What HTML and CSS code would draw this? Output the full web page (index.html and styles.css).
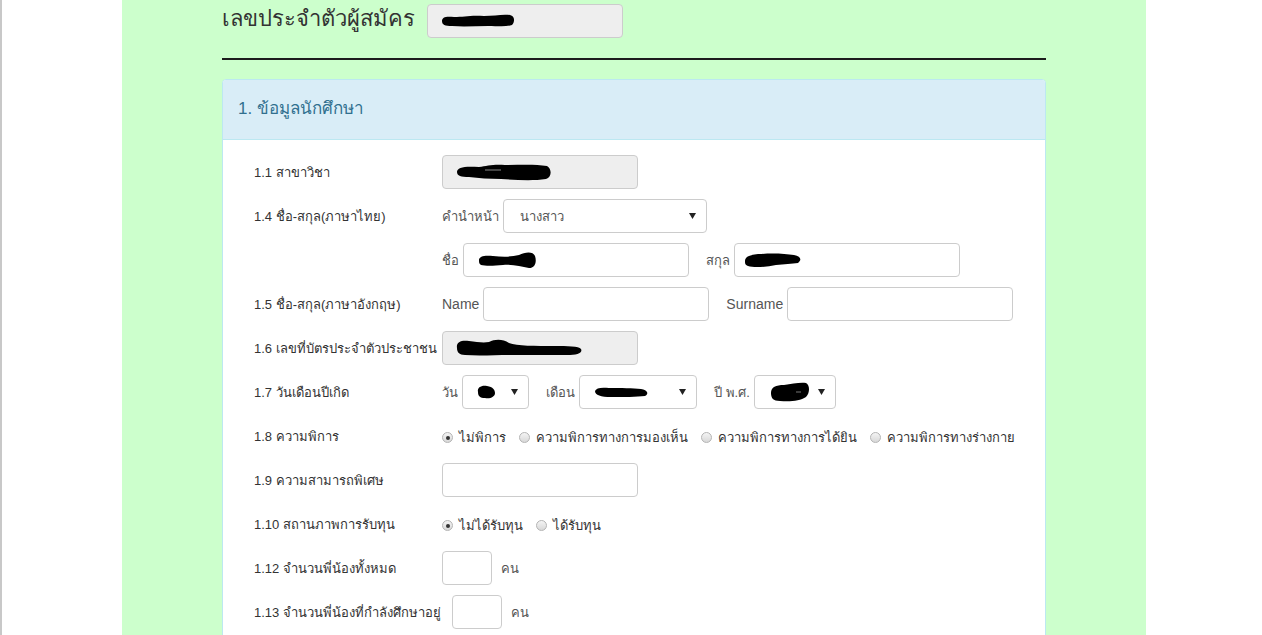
FILE: index.html
```html
<!DOCTYPE html>
<html lang="th">
<head>
<meta charset="utf-8">
<title>ข้อมูลนักศึกษา</title>
<link rel="stylesheet" href="styles.css">
</head>
<body>
<div class="page">
  <div class="sheet">
    <div class="head">
      <h2 class="head-title">เลขประจำตัวผู้สมัคร</h2>
      <div class="field ro w196 head-field">
        <svg class="blob" width="76" height="16" viewBox="0 0 76 16"><path d="M2 8 C2 4 6 3 14 4 C24 4 30 2 44 3 C54 3 62 1 70 2 C75 3 75 9 72 12 C66 14 58 13 48 13 C36 13 24 14 12 13 C5 13 2 12 2 8Z"/></svg>
      </div>
    </div>
    <hr class="rule">
    <div class="panel">
      <div class="panel-heading">1. ข้อมูลนักศึกษา</div>
      <div class="panel-body">
        <div class="row">
          <div class="lbl">1.1 สาขาวิชา</div>
          <div class="field ro w196">
            <svg class="blob" width="98" height="20" viewBox="0 0 98 20"><path d="M2 10 C2 5 10 4 24 5 C32 4 38 2 50 3 C64 3 80 2 92 4 C97 7 97 15 91 17 C78 19 62 18 46 17 C34 17 24 16 14 15 C6 15 2 14 2 10Z"/><path d="M30 8 L46 8" stroke="#888" stroke-width="1"/></svg>
          </div>
        </div>
        <div class="row">
          <div class="lbl">1.4 ชื่อ-สกุล(ภาษาไทย)</div>
          <div class="ctl">
            <span class="pre">คำนำหน้า</span>
            <div class="field sel w204"><span class="sel-text">นางสาว</span><svg class="arrow" width="7" height="6" viewBox="0 0 7 6"><path d="M0 0 L7 0 L3.5 6Z"/></svg></div>
          </div>
        </div>
        <div class="row">
          <div class="lbl"></div>
          <div class="ctl">
            <span class="pre">ชื่อ</span>
            <div class="field w226 tight">
              <svg class="blob" width="60" height="20" viewBox="0 0 60 20"><path d="M2 10 C2 6 8 5 16 6 C26 7 34 7 42 5 C48 2 56 1 58 6 C60 12 58 18 52 18 C44 17 36 14 26 15 C16 16 8 16 4 15 C2 14 2 12 2 10Z"/></svg>
            </div>
          </div>
          <div class="ctl">
            <span class="pre">สกุล</span>
            <div class="field w226 tighter">
              <svg class="blob" width="58" height="17" viewBox="0 0 58 17"><path d="M1 9 C1 4 8 2 18 2 C30 1 42 2 50 3 C57 4 58 8 54 11 C48 12 40 12 32 13 C22 15 10 16 4 14 C1 13 1 11 1 9Z"/></svg>
            </div>
          </div>
        </div>
        <div class="row">
          <div class="lbl">1.5 ชื่อ-สกุล(ภาษาอังกฤษ)</div>
          <div class="ctl">
            <span class="pre en">Name</span>
            <div class="field w226"></div>
          </div>
          <div class="ctl">
            <span class="pre en">Surname</span>
            <div class="field w226"></div>
          </div>
        </div>
        <div class="row">
          <div class="lbl">1.6 เลขที่บัตรประจำตัวประชาชน</div>
          <div class="field ro w196">
            <svg class="blob" width="128" height="20" viewBox="0 0 128 20"><path d="M2 10 C1 4 6 2 14 3 C22 4 28 5 34 4 C40 1 48 1 54 5 C62 8 80 8 100 8 C112 8 124 8 126 11 C128 15 122 17 112 17 C96 17 76 17 56 17 C40 17 24 18 10 17 C4 17 2 14 2 10Z"/></svg>
          </div>
        </div>
        <div class="row">
          <div class="lbl">1.7 วันเดือนปีเกิด</div>
          <div class="ctl">
            <span class="pre">วัน</span>
            <div class="field sel w67 sel-blob">
              <svg class="blob" width="20" height="16" viewBox="0 0 20 16"><path d="M2 8 C1 3 6 1 11 2 C17 3 19 6 19 9 C19 13 14 15 9 14 C4 14 2 12 2 8Z"/></svg>
              <svg class="arrow" width="7" height="6" viewBox="0 0 7 6"><path d="M0 0 L7 0 L3.5 6Z"/></svg>
            </div>
          </div>
          <div class="ctl">
            <span class="pre">เดือน</span>
            <div class="field sel w118 sel-blob">
              <svg class="blob" width="56" height="12" viewBox="0 0 56 12"><path d="M2 5 C3 2 8 1 16 2 C28 2 40 2 48 3 C55 4 56 8 52 10 C44 11 30 11 18 11 C8 11 2 9 2 5Z"/></svg>
              <svg class="arrow" width="7" height="6" viewBox="0 0 7 6"><path d="M0 0 L7 0 L3.5 6Z"/></svg>
            </div>
          </div>
          <div class="ctl">
            <span class="pre">ปี พ.ศ.</span>
            <div class="field sel w82 sel-blob">
              <svg class="blob" width="42" height="22" viewBox="0 0 42 22"><path d="M3 12 C3 6 8 4 16 4 C24 3 32 1 38 2 C42 4 42 12 38 16 C32 20 22 21 12 20 C5 20 3 17 3 12Z"/><path d="M28 11 L33 11" stroke="#777" stroke-width="1"/></svg>
              <svg class="arrow" width="7" height="6" viewBox="0 0 7 6"><path d="M0 0 L7 0 L3.5 6Z"/></svg>
            </div>
          </div>
        </div>
        <div class="row">
          <div class="lbl">1.8 ความพิการ</div>
          <div class="radios">
            <span class="radio on"><span class="dot"></span>ไม่พิการ</span>
            <span class="radio"><span class="dot"></span>ความพิการทางการมองเห็น</span>
            <span class="radio"><span class="dot"></span>ความพิการทางการได้ยิน</span>
            <span class="radio"><span class="dot"></span>ความพิการทางร่างกาย</span>
          </div>
        </div>
        <div class="row">
          <div class="lbl">1.9 ความสามารถพิเศษ</div>
          <div class="field w196"></div>
        </div>
        <div class="row">
          <div class="lbl">1.10 สถานภาพการรับทุน</div>
          <div class="radios">
            <span class="radio on"><span class="dot"></span>ไม่ได้รับทุน</span>
            <span class="radio"><span class="dot"></span>ได้รับทุน</span>
          </div>
        </div>
        <div class="row">
          <div class="lbl">1.12 จำนวนพี่น้องทั้งหมด</div>
          <div class="field w50"></div>
          <span class="unit">คน</span>
        </div>
        <div class="row">
          <div class="lbl lbl-wide">1.13 จำนวนพี่น้องที่กำลังศึกษาอยู่</div>
          <div class="field w50"></div>
          <span class="unit">คน</span>
        </div>
      </div>
    </div>
  </div>
</div>
</body>
</html>
```

FILE: styles.css
```css
html, body {
  margin: 0;
  padding: 0;
  background: #fff;
  overflow: hidden;
}

body {
  font-family: "Liberation Sans", Arial, "Noto Sans", sans-serif;
  color: #333;
}

.page {
  border-left: 2px solid #c8c8c8;
  height: 635px;
}

.sheet {
  width: 1024px;
  margin-left: 120px;
  height: 635px;
  background: #ccffcc;
  padding: 4px 100px 0;
  box-sizing: border-box;
}

.head {
  display: flex;
  align-items: center;
  gap: 12px;
  height: 34px;
}

.head-title {
  margin: 0;
  font-size: 22px;
  font-weight: normal;
  color: #333;
  line-height: 34px;
  padding-bottom: 4px;
}

.head-field {
  padding-left: 4px;
}

.rule {
  margin: 20px 0 19px;
  border: 0;
  border-top: 2px solid #1c1c1c;
  height: 0;
}

.panel {
  border: 1px solid #bce8f1;
  border-radius: 4px;
  background: #fff;
  height: 600px;
}

.panel-heading {
  height: 60px;
  display: flex;
  align-items: center;
  padding: 0 15px 4px;
  box-sizing: border-box;
  background: #d9edf7;
  border-bottom: 1px solid #bce8f1;
  color: #31708f;
  font-size: 17px;
  border-radius: 3px 3px 0 0;
}

.panel-body {
  padding: 15px 15px 0 31px;
}

.row {
  display: flex;
  align-items: center;
  height: 34px;
  margin-bottom: 10px;
}

.lbl {
  min-width: 188px;
  box-sizing: border-box;
  font-size: 13px;
  color: #333;
  white-space: nowrap;
  flex-shrink: 0;
}

.lbl-wide {
  min-width: 198px;
}

.ctl {
  display: flex;
  align-items: center;
  margin-right: 17px;
}

.pre {
  font-size: 13px;
  color: #555;
  margin-right: 4px;
  white-space: nowrap;
}

.pre.en {
  font-size: 14px;
}

.field {
  height: 34px;
  box-sizing: border-box;
  border: 1px solid #ccc;
  border-radius: 4px;
  background: #fff;
  display: flex;
  align-items: center;
  padding: 0 12px;
  flex-shrink: 0;
}

.field.ro {
  background: #eee;
}

.field.tight {
  padding-left: 13px;
}

.field.tighter {
  padding-left: 9px;
}

.w196 { width: 196px; }
.w204 { width: 204px; }
.w226 { width: 226px; }
.w67 { width: 67px; }
.w118 { width: 118px; }
.w82 { width: 82px; }
.w50 { width: 50px; }

.blob {
  display: block;
  fill: #000;
}

.sel {
  justify-content: space-between;
  padding: 0 10px 0 16px;
}

.sel-blob {
  padding-left: 13px;
}

.sel-text {
  font-size: 13px;
  color: #555;
}

.arrow {
  display: block;
  fill: #222;
}

.radios {
  display: flex;
  align-items: center;
  gap: 13px;
  padding-top: 3px;
}

.radio {
  display: flex;
  align-items: center;
  font-size: 13px;
  color: #333;
  white-space: nowrap;
}

.dot {
  width: 11px;
  height: 11px;
  box-sizing: border-box;
  border-radius: 50%;
  border: 1px solid #b4b4b4;
  background: linear-gradient(#f4f4f4, #d8d8d8);
  margin-right: 6px;
  display: flex;
  align-items: center;
  justify-content: center;
}

.radio.on .dot::after {
  content: "";
  width: 4px;
  height: 4px;
  border-radius: 50%;
  background: #333;
}

.unit {
  font-size: 13px;
  color: #555;
  margin-left: 9px;
}
```
